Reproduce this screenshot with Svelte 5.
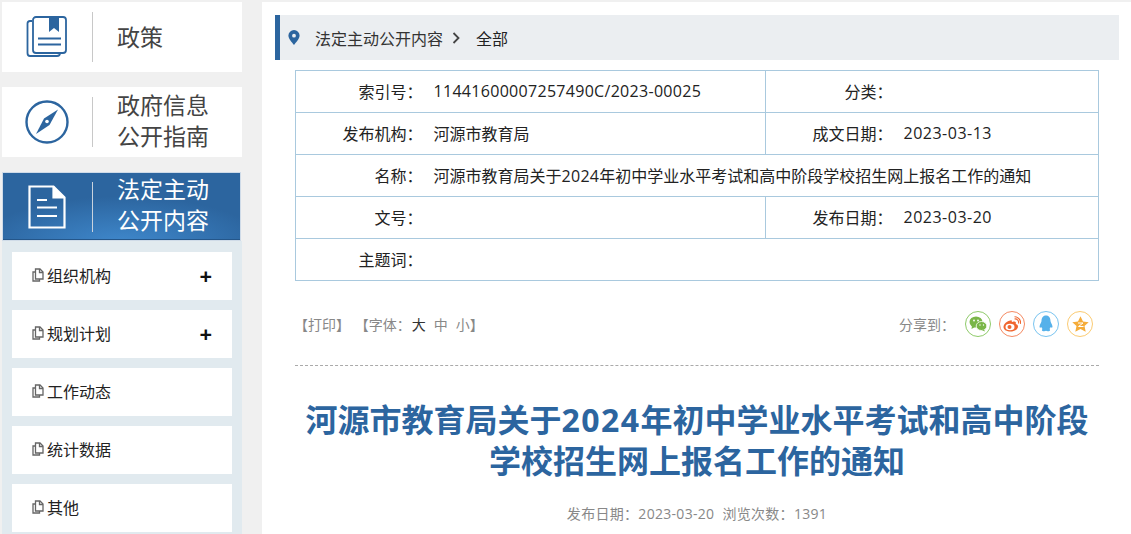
<script>
  const subs = [
    { name: "组织机构", more: true },
    { name: "规划计划", more: true },
    { name: "工作动态" },
    { name: "统计数据" },
    { name: "其他" }
  ];
</script>

<div class="page">
  <aside class="side">
    <a class="tab">
      <span class="ico">
        <svg width="42" height="42" viewBox="0 0 42 42" fill="none" stroke="#2c659f" stroke-width="1.8">
          <path d="M6 5H4Q1.500 5 1.500 7.500V37Q1.500 40 4 40H31Q34 40 34 37" />
          <rect x="7" y="1" width="33" height="36" rx="3" />
          <path d="M23 1h10v15l-5-4-5 4z" fill="#2c659f" stroke="none" />
          <path d="M12 22.500h23M12 28.500h23" />
        </svg>
      </span>
      <span class="label">政策</span>
    </a>
    <a class="tab">
      <span class="ico">
        <svg width="44" height="44" viewBox="0 0 44 44" fill="none">
          <circle cx="22" cy="22" r="20.500" stroke="#2c659f" stroke-width="2.400" />
          <path d="M33 9.500 24.500 25 11 34l8-15.500z" fill="#2c659f" />
          <circle cx="22" cy="21.500" r="1.800" fill="#fff" />
        </svg>
      </span>
      <span class="label two">政府信息<br />公开指南</span>
    </a>
    <a class="tab on">
      <span class="ico">
        <svg width="38" height="44" viewBox="0 0 38 44" fill="none" stroke="#fff" stroke-width="2.200">
          <path d="M1.500 1.500h24l11 11v30h-35z" />
          <path d="M25.500 1.500v11h11" fill="#fff" />
          <path d="M9 15h10M9 22.500h20M9 31h20" />
        </svg>
      </span>
      <span class="label two">法定主动<br />公开内容</span>
    </a>
    <ul class="subs">
      {#each subs as s}
        <li>
          <svg class="doc" width="12" height="14" viewBox="0 0 12 14" fill="none" stroke="#666" stroke-width="1.300">
            <path d="M3.500 1h4.500l3 3v7h-7.500z" />
            <path d="M7.500 1v3.500h3.500" />
            <path d="M3.500 4H1v9h6.500v-2" />
          </svg>
          <span>{s.name}</span>
          {#if s.more}<b class="plus">+</b>{/if}
        </li>
      {/each}
    </ul>
  </aside>

  <main class="main">
    <div class="crumb">
      <svg width="12" height="15" viewBox="0 0 12 15">
        <path fill-rule="evenodd" fill="#2c659f" d="M6 0a5.600 5.600 0 0 1 5.600 5.600C11.600 9 8 12.500 6 15 4 12.500.4 9 .4 5.600A5.600 5.600 0 0 1 6 0zm0 3.800a1.900 1.900 0 1 0 0 3.800 1.900 1.900 0 0 0 0-3.800z" />
      </svg>
      <span class="c1">法定主动公开内容</span>
      <svg class="gt" width="8" height="12" viewBox="0 0 8 12" fill="none" stroke="#444" stroke-width="1.800"><path d="M1.500 1l5 5-5 5" /></svg>
      <span class="c2">全部</span>
    </div>

    <div class="body">
      <table class="meta">
        <colgroup>
          <col class="c-l" /><col class="c-v" /><col class="c-l" /><col />
        </colgroup>
        <tbody>
          <tr>
            <th>索引号：</th><td><span class="num">11441600007257490C/2023-00025</span></td>
            <th>分类：</th><td></td>
          </tr>
          <tr>
            <th>发布机构：</th><td>河源市教育局</td>
            <th>成文日期：</th><td><span class="date">2023-03-13</span></td>
          </tr>
          <tr>
            <th>名称：</th><td colspan="3">河源市教育局关于<span class="num">2024</span>年初中学业水平考试和高中阶段学校招生网上报名工作的通知</td>
          </tr>
          <tr>
            <th>文号：</th><td></td>
            <th>发布日期：</th><td><span class="date">2023-03-20</span></td>
          </tr>
          <tr>
            <th>主题词：</th><td colspan="3"></td>
          </tr>
        </tbody>
      </table>

      <div class="tools">
        <div class="left">
          <span class="print">【打印】</span>
          <span class="font">【字体：<em>大</em><i>中</i><i>小</i>】</span>
        </div>
        <div class="share">
          <span class="to">分享到：</span>
          <span class="dot wx">
            <svg width="18" height="16" viewBox="0 0 18 16" fill="#7ab648">
              <ellipse cx="7" cy="6" rx="6.500" ry="5.500" />
              <path d="M3 9.500 2.500 13l3.500-2z" />
              <ellipse cx="12.500" cy="10" rx="5.300" ry="4.500" stroke="#fff" stroke-width=".8" />
              <path d="M15 13.500l1 2-3-1.200z" />
              <circle cx="5" cy="4.500" r=".9" fill="#fff" /><circle cx="9" cy="4.500" r=".9" fill="#fff" />
              <circle cx="11" cy="9" r=".7" fill="#fff" /><circle cx="14.500" cy="9" r=".7" fill="#fff" />
            </svg>
          </span>
          <span class="dot wb">
            <svg width="18" height="16" viewBox="0 0 18 16">
              <path fill="#f0662f" d="M7.500 4.500C4 5 .5 8 .5 11c0 3 3.500 4.500 7 4.500 4.500 0 7.500-2.500 7.500-5 0-1.600-1.500-2.300-2.300-2.500.5-1.300.2-2.500-1.500-2.500-1 0-2 .4-2.400.5.300-1.200-.3-2-1.300-1.500z" />
              <ellipse cx="7" cy="11" rx="4.500" ry="3.200" fill="#fff" />
              <circle cx="6.500" cy="11" r="2" fill="#f0662f" />
              <path d="M11.500 3a3.500 3.500 0 0 1 4 4.500M11.500 .8a6 6 0 0 1 6 7" fill="none" stroke="#f0662f" stroke-width="1.100" />
            </svg>
          </span>
          <span class="dot qq">
            <svg width="14" height="17" viewBox="0 0 14 17" fill="#56b1ea">
              <path d="M7 .5C3.800.5 2.500 3 2.500 6 2.500 7 1 9 .6 11c-.3 1.700.4 2.300 1.700 1 .3 1 .8 1.600 1.300 2-1 .5-1.200 2.300 1.500 2.300 1 0 1.600-.2 1.900-.5.300.3.900.5 1.900.5 2.700 0 2.500-1.800 1.500-2.300.5-.4 1-1 1.300-2 1.300 1.300 2 .7 1.700-1C13 9 11.500 7 11.500 6 11.500 3 10.200.5 7 .5z" />
            </svg>
          </span>
          <span class="dot qz">
            <svg width="17" height="16" viewBox="0 0 17 16">
              <path fill="#f5ac3a" d="M8.500.3l2.500 5.200 5.700.7-4.200 3.900 1.200 5.600-5.200-2.800-5.200 2.800 1.200-5.600L.3 6.200 6 5.500z" />
              <path d="M6 7h5l-4.500 3.500h5" fill="none" stroke="#fff" stroke-width="1" />
            </svg>
          </span>
        </div>
      </div>

      <div class="article">
        <h1>河源市教育局关于<span class="yr">2024</span>年初中学业水平考试和高中阶段<br />学校招生网上报名工作的通知</h1>
        <p class="info"><span>发布日期：2023-03-20</span><span>浏览次数：1391</span></p>
      </div>
    </div>
  </main>
</div>

<style>
  :global(html), :global(body) { margin: 0; height: 534px; overflow: hidden; background: #f0f0f0; }
  .page {
    display: flex;
    height: 534px;
    overflow: hidden;
    padding: 2px 0 0 2px;
    box-sizing: border-box;
    font-family: "Open Sans", "Noto Sans CJK SC", sans-serif;
    color: #333;
  }
  .side { width: 240px; flex: none; display: flex; flex-direction: column; }
  .tab {
    display: flex;
    flex: none;
    align-items: center;
    height: 70px;
    margin-bottom: 15px;
    background: #fff;
  }
  .tab.on {
    height: 69px;
    box-sizing: border-box;
    margin: 0 1px 0 0;
    color: #fff;
    background: radial-gradient(ellipse 60% 70% at 50% 105%, #3f88cc, #2c659f);
    border: 1px solid #cfdbe8;
    box-shadow: inset 0 -1px 0 #24568a;
  }
  .tab.on .ico { width: 90px; border-right-color: #c9d3de; }
  .ico {
    width: 91px;
    height: 50px;
    flex: none;
    display: flex;
    align-items: center;
    justify-content: center;
    border-right: 1px solid #c8c8c8;
    box-sizing: border-box;
    padding-right: 1px;
  }
  .label {
    margin-left: 24px;
    font-size: 23px;
    line-height: 30px;
    color: #444;
  }
  .label.two { padding-bottom: 3px; line-height: 31px; }
  .on .label { color: #fff; }
  .subs {
    flex: 1;
    margin: 0;
    padding: 11px 10px 0;
    list-style: none;
    background: #e1eaef;
  }
  .subs li {
    display: flex;
    align-items: center;
    height: 48px;
    margin-bottom: 10px;
    padding: 0 20px 2px;
    box-sizing: border-box;
    background: #fff;
    font-size: 16px;
    color: #222;
  }
  .doc { margin-right: 3px; }
  .plus { margin-left: auto; font-size: 22px; font-weight: 700; color: #111; line-height: 1; }

  .main { flex: 1; margin-left: 20px; background: #fff; min-width: 0; }
  .crumb {
    display: flex;
    align-items: center;
    height: 45px;
    margin: 13px 12px 0 13px;
    padding-left: 8px;
    background: #ebeef1;
    border-left: 5px solid #2c659f;
    font-size: 16px;
  }
  .c1 { margin-left: 15px; }
  .gt { margin-left: 9px; }
  .c2 { margin-left: 16px; color: #222; }

  .body { margin: 10px 32px 0 33px; }
  .meta {
    width: 804px;
    table-layout: fixed;
    border-collapse: collapse;
    font-size: 16px;
    color: #222;
  }
  .c-l { width: 128px; }
  .c-v { width: 342px; }
  .meta tr { height: 42px; }
  .meta th, .meta td { border: 1px solid #a9c9de; padding: 0 0 2px; font-weight: 400; }
  .meta th { text-align: right; border-right: 0; padding-right: 1px; }
  .meta td { padding-left: 10px; border-left: 0; }
  .num { letter-spacing: .3px; }
  .date { letter-spacing: .5px; }

  .tools {
    display: flex;
    justify-content: space-between;
    align-items: center;
    height: 85px;
    padding: 1px 6px 0 0;
    box-sizing: border-box;
    border-bottom: 1px dashed #aaa;
    font-size: 14px;
    color: #888;
  }
  .print { margin-left: -1px; }
  .font { margin-left: 1px; }
  .font em { font-style: normal; color: #333; margin-left: 1px; }
  .font i { font-style: normal; margin-left: 8px; }
  .share { display: flex; align-items: center; gap: 8px; }
  .to { margin-right: 2px; }
  .dot {
    display: flex;
    align-items: center;
    justify-content: center;
    width: 26px;
    height: 26px;
    box-sizing: border-box;
    border-radius: 50%;
    border: 1px solid;
  }
  .wx { border-color: #8fcb6a; }
  .wb { border-color: #f58a62; }
  .qq { border-color: #79c4f0; }
  .qz { border-color: #fbcb72; }

  .article { text-align: center; }
  h1 {
    margin: 33px 0 0;
    font-size: 32px;
    line-height: 41px;
    font-weight: 700;
    color: #2c659f;
  }
  .yr { letter-spacing: 1.500px; }
  .info { margin: 23px 0 0; font-size: 14px; letter-spacing: .3px; color: #888; line-height: 20px; }
  .info span + span { margin-left: 8px; }
</style>
